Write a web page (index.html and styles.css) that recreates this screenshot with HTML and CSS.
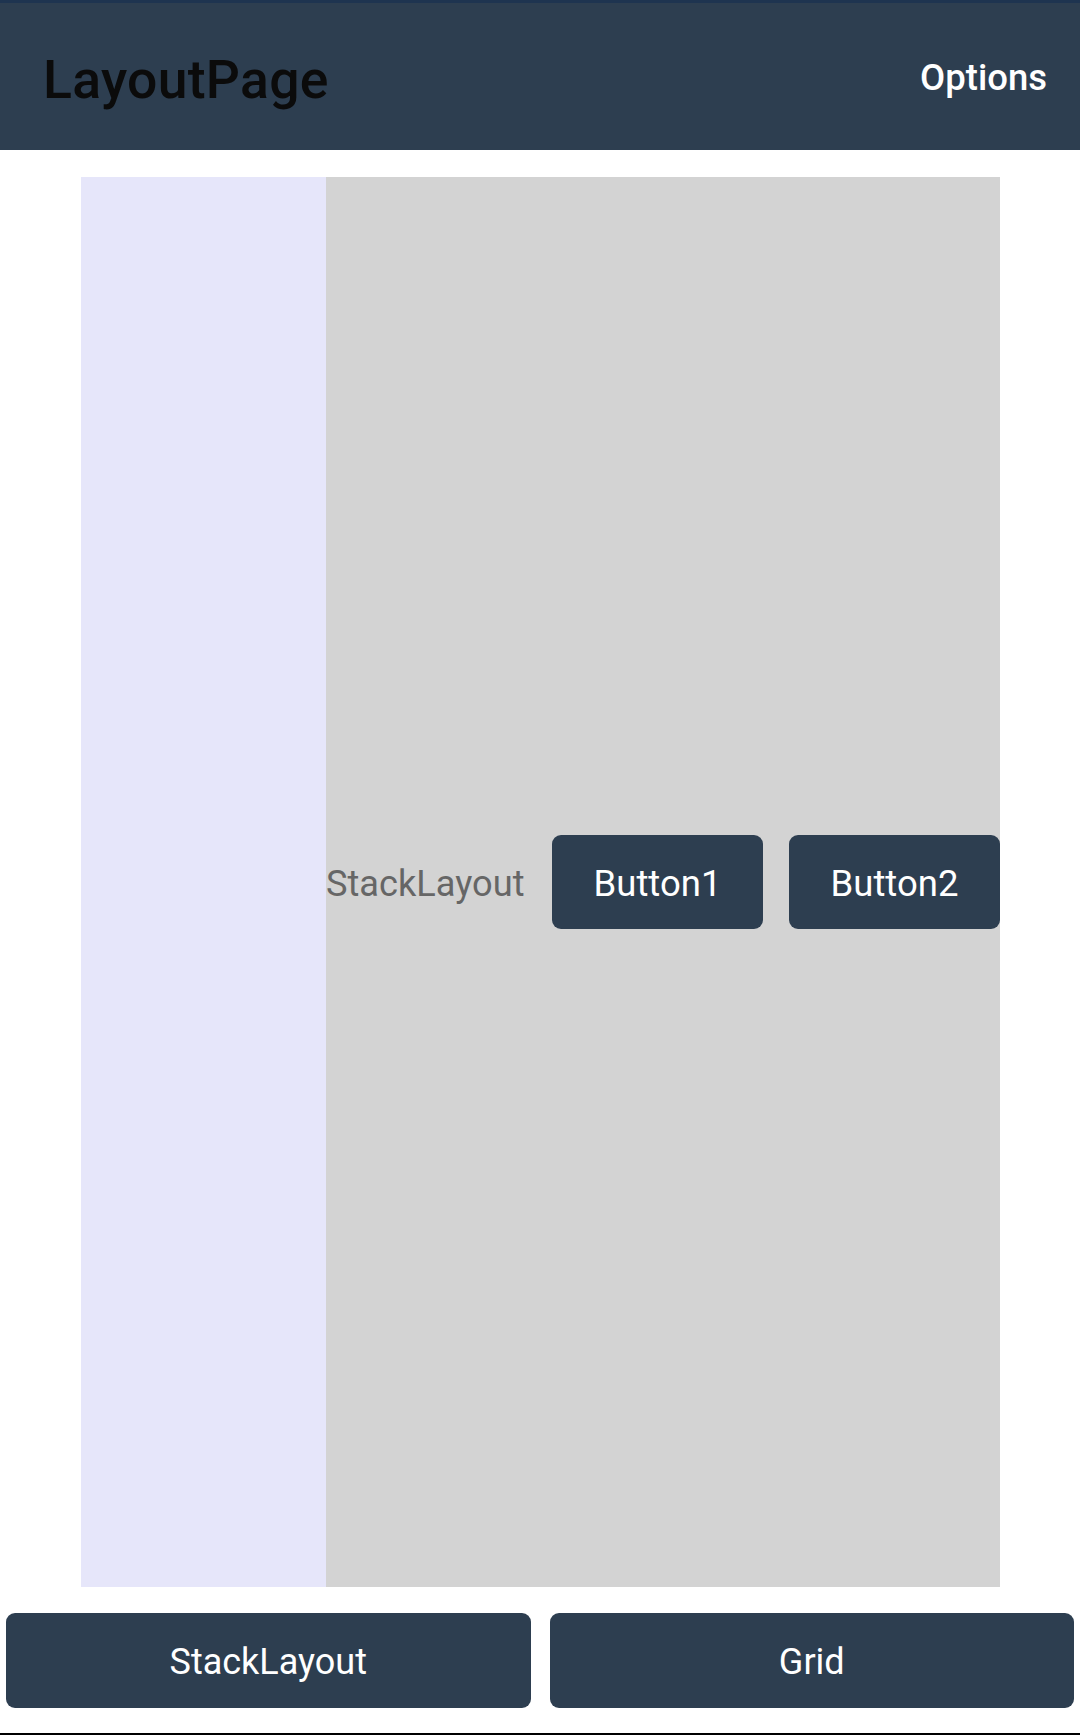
FILE: index.html
```html
<!DOCTYPE html>
<html>
<head>
<meta charset="utf-8">
<link rel="stylesheet" href="styles.css">
</head>
<body>
<div class="page">
  <header class="topbar">
    <div class="title">LayoutPage</div>
    <div class="options">Options</div>
  </header>
  <main class="content">
    <div class="side"></div>
    <div class="stack">
      <div class="label">StackLayout</div>
      <button class="btn btn-small btn-first">Button1</button>
      <button class="btn btn-small">Button2</button>
    </div>
  </main>
  <footer class="footer">
    <button class="btn btn-wide">StackLayout</button>
    <button class="btn btn-wide">Grid</button>
  </footer>
  <div class="bottom-line"></div>
</div>
</body>
</html>
```

FILE: styles.css
```css
html, body {
  margin: 0;
  padding: 0;
  background: #ffffff;
}
.page {
  width: 1080px;
  height: 1735px;
  display: flex;
  flex-direction: column;
  font-family: Roboto, "Liberation Sans", sans-serif;
}
.topbar {
  box-sizing: border-box;
  height: 150px;
  background: #2d3e50;
  border-top: 3px solid #1e3450;
  display: flex;
  align-items: center;
  justify-content: space-between;
  padding: 0 33px 0 43px;
}
.title {
  font-size: 53.5px;
  font-weight: 500;
  color: #0b0b0b;
  letter-spacing: 0.3px;
  padding-top: 6px;
}
.options {
  font-size: 36.5px;
  font-weight: 500;
  color: #ffffff;
  padding-top: 2px;
}
.content {
  height: 1410px;
  margin: 27px 80px 0 81px;
  display: flex;
}
.side {
  width: 245px;
  background: #e6e6fa;
}
.stack {
  flex: 1;
  background: #d3d3d3;
  display: flex;
  align-items: center;
}
.label {
  flex: 1;
  font-size: 36.2px;
  color: #666666;
  padding-top: 2px;
}
.btn {
  border: none;
  background: #2d3e50;
  color: #ffffff;
  font-family: Roboto, "Liberation Sans", sans-serif;
  font-size: 36.5px;
  border-radius: 9px;
  padding: 3px 0 0 0;
  cursor: pointer;
}
.btn-small {
  width: 211px;
  height: 94px;
  margin-left: 26px;
}
.btn-first {
  margin-left: 0;
}
.footer {
  display: flex;
  gap: 19px;
  padding: 0 6px;
  margin-top: 26px;
}
.btn-wide {
  flex: 1;
  height: 95px;
  font-size: 36px;
}
.bottom-line {
  margin-top: auto;
  height: 2px;
  background: #000000;
}
```
